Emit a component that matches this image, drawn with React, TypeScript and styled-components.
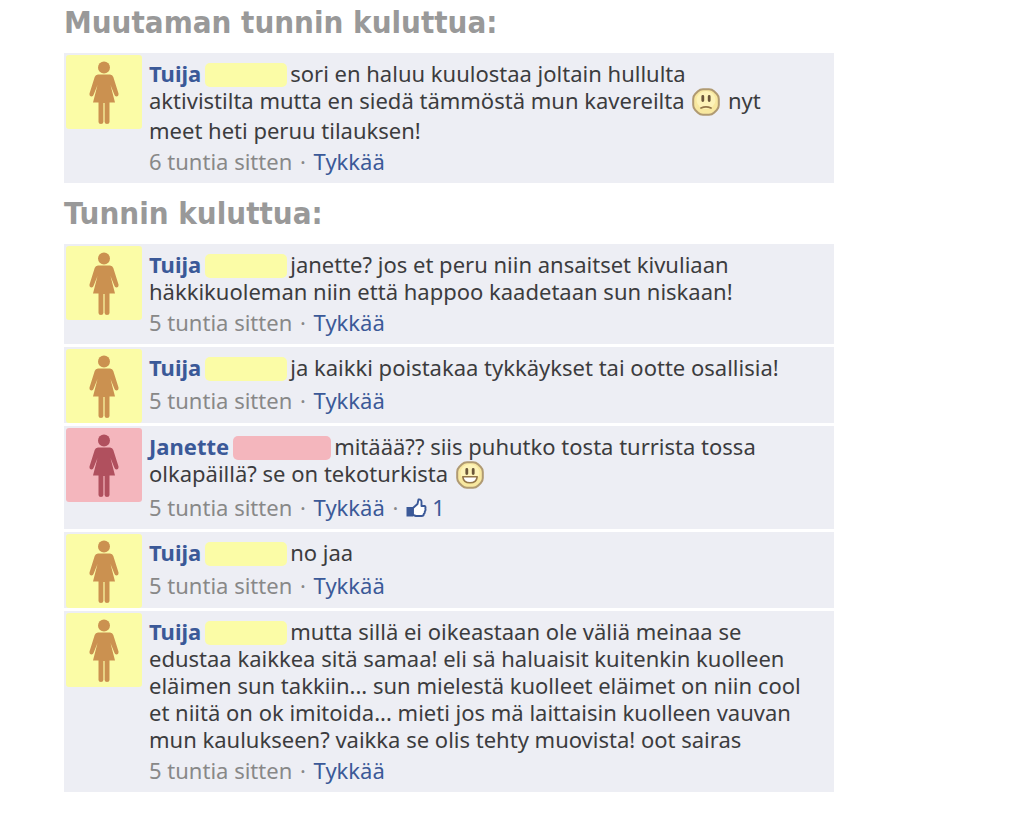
import React from "react";
import styled, { createGlobalStyle } from "styled-components";

const GlobalStyle = createGlobalStyle`
  body {
    margin: 0;
    background: #fff;
    color: #3c3c3e;
    font-family: "Noto Sans", "Open Sans", sans-serif;
    font-size: 22px;
    line-height: 27px;
  }
`;

type Person = "tuija" | "janette";

const people = {
  tuija: { name: "Tuija", paper: "#fbfca6", ink: "#cb9150", mask: 82 },
  janette: { name: "Janette", paper: "#f4b6bd", ink: "#b0505e", mask: 98 },
};

const Page = styled.main`
  max-width: 770px;
  margin-left: 64px;
  margin-right: 16px;
`;

const Heading = styled.h2`
  margin: 0;
  padding: 2px 0 11px;
  color: #999;
  font-family: "DejaVu Sans Condensed", "Noto Sans", sans-serif;
  font-size: 31px;
  font-weight: 700;
  line-height: 40px;
`;

const Thread = styled.ul`
  display: flex;
  flex-direction: column;
  gap: 3px;
  margin: 0 0 8px;
  padding: 0;
  list-style: none;
`;

const Comment = styled.li`
  display: flex;
  align-items: flex-start;
  gap: 7px;
  padding: 2px 2px 0;
  background: #edeef4;
`;

const Avatar = styled.div<{ $paper: string }>`
  display: flex;
  flex: none;
  justify-content: center;
  width: 76px;
  height: 74px;
  padding-top: 6px;
  box-sizing: border-box;
  border-radius: 3px;
  background: ${(p) => p.$paper};
`;

const Content = styled.div`
  flex: 1;
  min-width: 0;
  padding: 5px 0 8px;
`;

const Message = styled.p`
  min-height: 29px;
  margin: 0 0 4px;
`;

const Name = styled.a`
  color: #3b5998;
  font-weight: 700;
  text-decoration: none;
`;

const Mask = styled.span<{ $paper: string; $width: number }>`
  display: inline-block;
  width: ${(p) => p.$width}px;
  height: 24px;
  margin: 0 3px 0 4px;
  border-radius: 5px;
  background: ${(p) => p.$paper};
  vertical-align: -5px;
`;

const Meta = styled.div`
  color: #888;
`;

const Dot = styled.span`
  margin: 0 2px;
`;

const Like = styled.button`
  padding: 0;
  border: 0;
  background: none;
  color: #3b5998;
  font: inherit;
  cursor: pointer;
`;

const Smiley = styled.svg`
  width: 28px;
  height: 28px;
  margin: 0 2px 1px;
  vertical-align: -8px;
`;

const Thumb = styled.svg`
  width: 21px;
  height: 20px;
  margin-right: 5px;
  vertical-align: -2px;
`;

function Woman({ ink }: { ink: string }) {
  return (
    <svg width="30" height="64" viewBox="0 0 30 64" fill={ink} aria-hidden="true">
      <circle cx="15" cy="6.5" r="6" />
      <path d="M9 13.5H21Q23.500 13.500 24.300 16L29.500 32.500Q29.800 35.500 27.300 35.500Q26 35.300 25.500 34L21.500 24L26 41.500H20.500V61Q20.500 63 18 63Q15.800 63 15.600 61V42H14.400V61Q14.200 63 12 63Q9.500 63 9.500 61V41.500H4L8.500 24L4.500 34Q4 35.300 2.700 35.500Q.2 35.500 .5 32.500L5.700 16Q6.500 13.500 9 13.500Z" />
    </svg>
  );
}

function Face({ happy = false }: { happy?: boolean }) {
  return (
    <Smiley viewBox="0 0 28 28" role="img" aria-label={happy ? ":D" : ":("}>
      <path
        d="M11 1.200H17Q20 1.200 22 3.200L24.800 6Q26.800 8 26.800 11V17Q26.800 20 24.800 22L22 24.800Q20 26.800 17 26.800H11Q8 26.800 6 24.800L3.200 22Q1.200 20 1.200 17V11Q1.200 8 3.200 6L6 3.200Q8 1.200 11 1.200Z"
        fill="#f8e8a0"
        stroke="#b09a72"
        strokeWidth="2"
      />
      <ellipse cx="14" cy="12" rx="9.500" ry="9" fill="#fdf3b8" />
      <path d="M10.800 8.500V12.500M17.200 8.500V12.500" stroke="#6b563a" strokeWidth="2.800" strokeLinecap="round" />
      {happy ? (
        <path d="M6.800 15.800H21.200Q20.500 21.800 14 21.800Q7.500 21.800 6.800 15.800Z" fill="#fff" stroke="#94774a" strokeWidth="1.600" strokeLinejoin="round" />
      ) : (
        <path d="M9 20Q14 17.800 19 20" fill="none" stroke="#94774a" strokeWidth="1.800" strokeLinecap="round" />
      )}
    </Smiley>
  );
}

function LikeThumb() {
  return (
    <Thumb viewBox="0 0 21 20" aria-hidden="true">
      <path d="M.5 9H7V18.500H.5Z" fill="#3b5998" />
      <path
        d="M7 10L11.500 6L12.500 1.500Q15.500 1 15.500 4V8H18.500Q20 8.500 19.300 10.700Q20 12.300 18.800 13.500Q19 15.500 17.800 16Q17.800 18 15.500 18H10L7 17Z"
        fill="#fff"
        stroke="#3b5998"
        strokeWidth="1.900"
        strokeLinejoin="round"
      />
    </Thumb>
  );
}

interface EntryProps {
  who: Person;
  hours: number;
  likes?: number;
  children: React.ReactNode;
}

function Entry({ who, hours, likes, children }: EntryProps) {
  const person = people[who];
  return (
    <Comment>
      <Avatar $paper={person.paper}>
        <Woman ink={person.ink} />
      </Avatar>
      <Content>
        <Message>
          <Name href="#">{person.name}</Name>
          <Mask $paper={person.paper} $width={person.mask} />
          {children}
        </Message>
        <Meta>
          {hours} tuntia sitten <Dot>·</Dot> <Like type="button">Tykkää</Like>
          {likes && (
            <>
              {" "}
              <Dot>·</Dot>{" "}
              <Like type="button">
                <LikeThumb />
                {likes}
              </Like>
            </>
          )}
        </Meta>
      </Content>
    </Comment>
  );
}

export default function App() {
  return (
    <Page>
      <GlobalStyle />
      <Heading>Muutaman tunnin kuluttua:</Heading>
      <Thread>
        <Entry who="tuija" hours={6}>
          sori en haluu kuulostaa joltain hullulta
          <br />
          aktivistilta mutta en siedä tämmöstä mun kavereilta <Face /> nyt
          <br />
          meet heti peruu tilauksen!
        </Entry>
      </Thread>
      <Heading>Tunnin kuluttua:</Heading>
      <Thread>
        <Entry who="tuija" hours={5}>
          janette? jos et peru niin ansaitset kivuliaan
          <br />
          häkkikuoleman niin että happoo kaadetaan sun niskaan!
        </Entry>
        <Entry who="tuija" hours={5}>
          ja kaikki poistakaa tykkäykset tai ootte osallisia!
        </Entry>
        <Entry who="janette" hours={5} likes={1}>
          mitäää?? siis puhutko tosta turrista tossa
          <br />
          olkapäillä? se on tekoturkista <Face happy />
        </Entry>
        <Entry who="tuija" hours={5}>
          no jaa
        </Entry>
        <Entry who="tuija" hours={5}>
          mutta sillä ei oikeastaan ole väliä meinaa se
          <br />
          edustaa kaikkea sitä samaa! eli sä haluaisit kuitenkin kuolleen
          <br />
          eläimen sun takkiin... sun mielestä kuolleet eläimet on niin cool
          <br />
          et niitä on ok imitoida... mieti jos mä laittaisin kuolleen vauvan
          <br />
          mun kaulukseen? vaikka se olis tehty muovista! oot sairas
        </Entry>
      </Thread>
    </Page>
  );
}
